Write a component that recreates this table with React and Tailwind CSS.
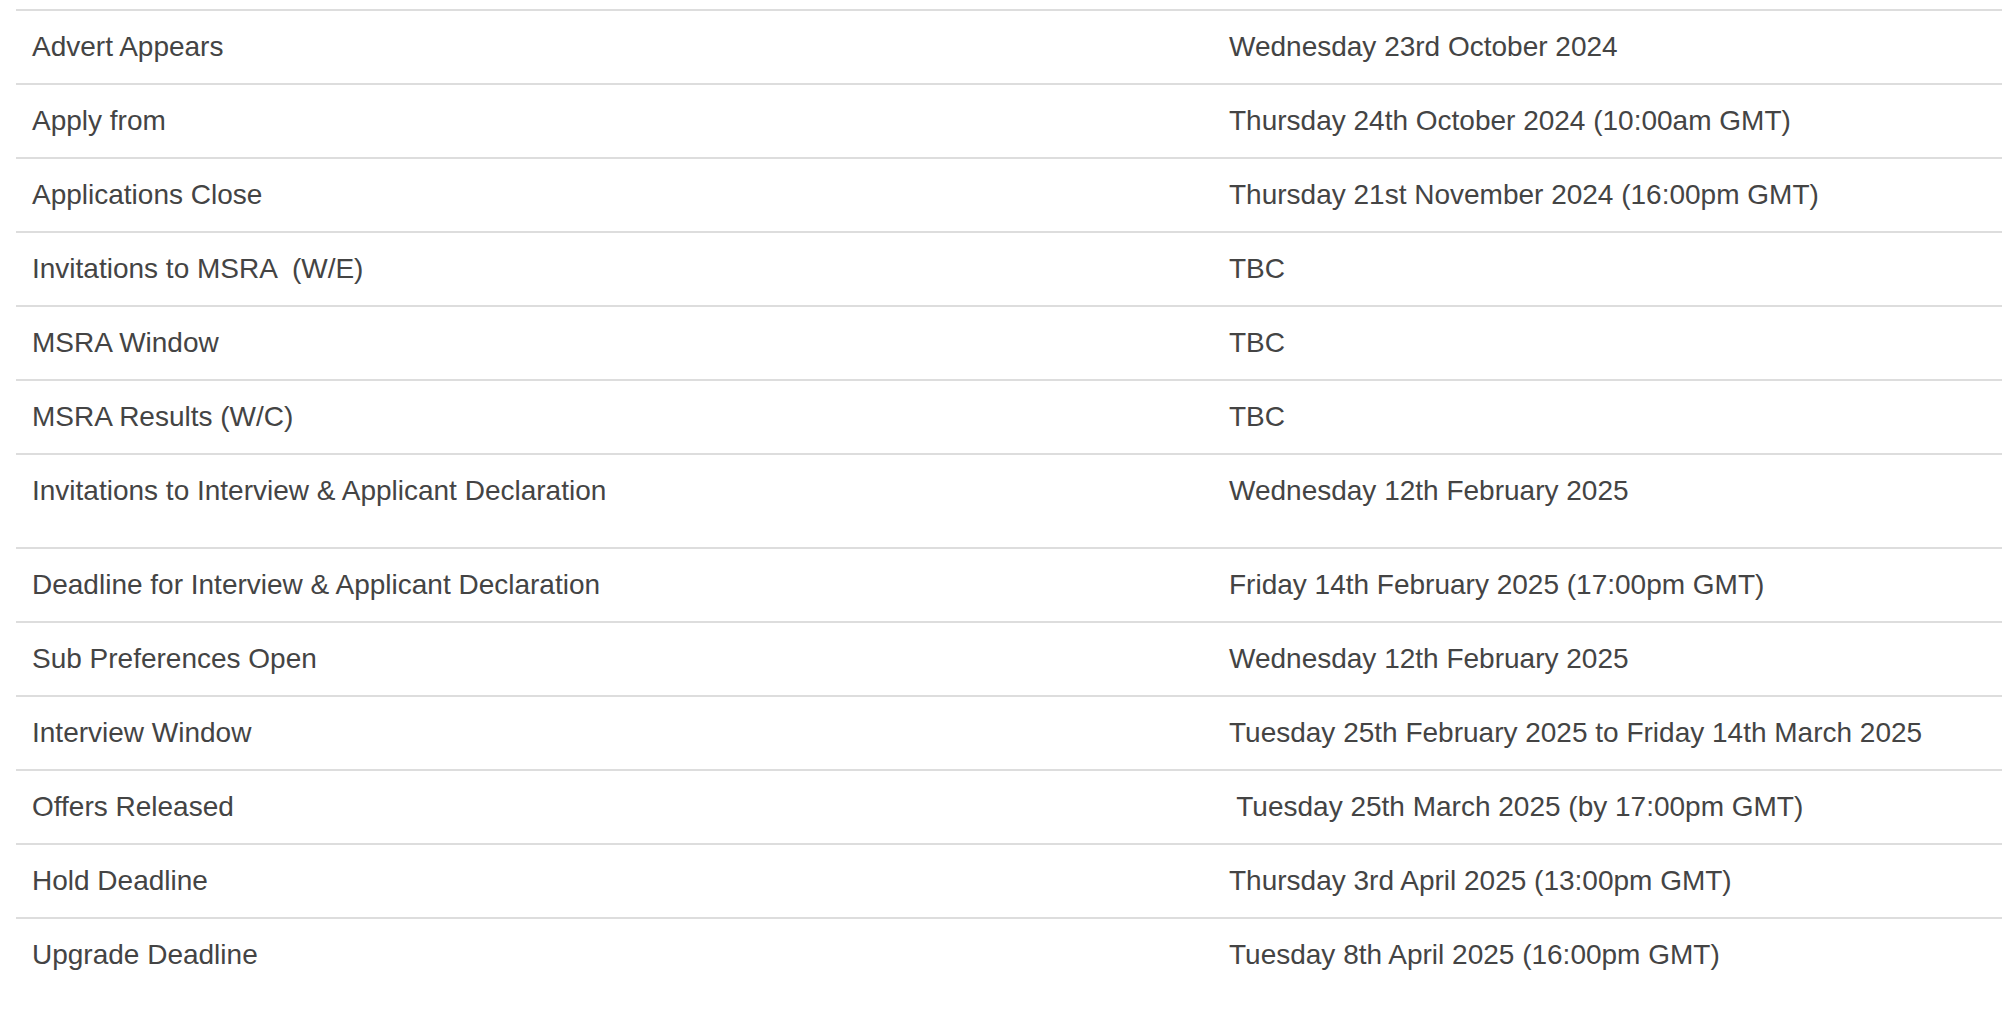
const rows = [
  ["Advert Appears", "Wednesday 23rd October 2024"],
  ["Apply from", "Thursday 24th October 2024 (10:00am GMT)"],
  ["Applications Close", "Thursday 21st November 2024 (16:00pm GMT)"],
  ["Invitations to MSRA  (W/E)", "TBC"],
  ["MSRA Window", "TBC"],
  ["MSRA Results (W/C)", "TBC"],
  ["Invitations to Interview & Applicant Declaration", "Wednesday 12th February 2025", true],
  ["Deadline for Interview & Applicant Declaration", "Friday 14th February 2025 (17:00pm GMT)"],
  ["Sub Preferences Open", "Wednesday 12th February 2025"],
  ["Interview Window", "Tuesday 25th February 2025 to Friday 14th March 2025"],
  ["Offers Released", " Tuesday 25th March 2025 (by 17:00pm GMT)"],
  ["Hold Deadline", "Thursday 3rd April 2025 (13:00pm GMT)"],
  ["Upgrade Deadline", "Tuesday 8th April 2025 (16:00pm GMT)"],
];

export default function App() {
  return (
    <div className="min-h-screen bg-white pt-[9px] pl-4 font-['Liberation_Sans',Arial,sans-serif] text-[28px] leading-[40px] text-[#444444] overflow-hidden">
      <div className="w-[2100px]">
        {rows.map(([label, date, tall]) => (
          <div
            key={label}
            className="grid grid-cols-[1197px_1fr] border-t-2 border-[#dddddd]"
          >
            <div className={`px-4 pt-4 whitespace-pre ${tall ? "pb-9" : "pb-4"}`}>{label}</div>
            <div className={`px-4 pt-4 whitespace-pre ${tall ? "pb-9" : "pb-4"}`}>{date}</div>
          </div>
        ))}
      </div>
    </div>
  );
}
